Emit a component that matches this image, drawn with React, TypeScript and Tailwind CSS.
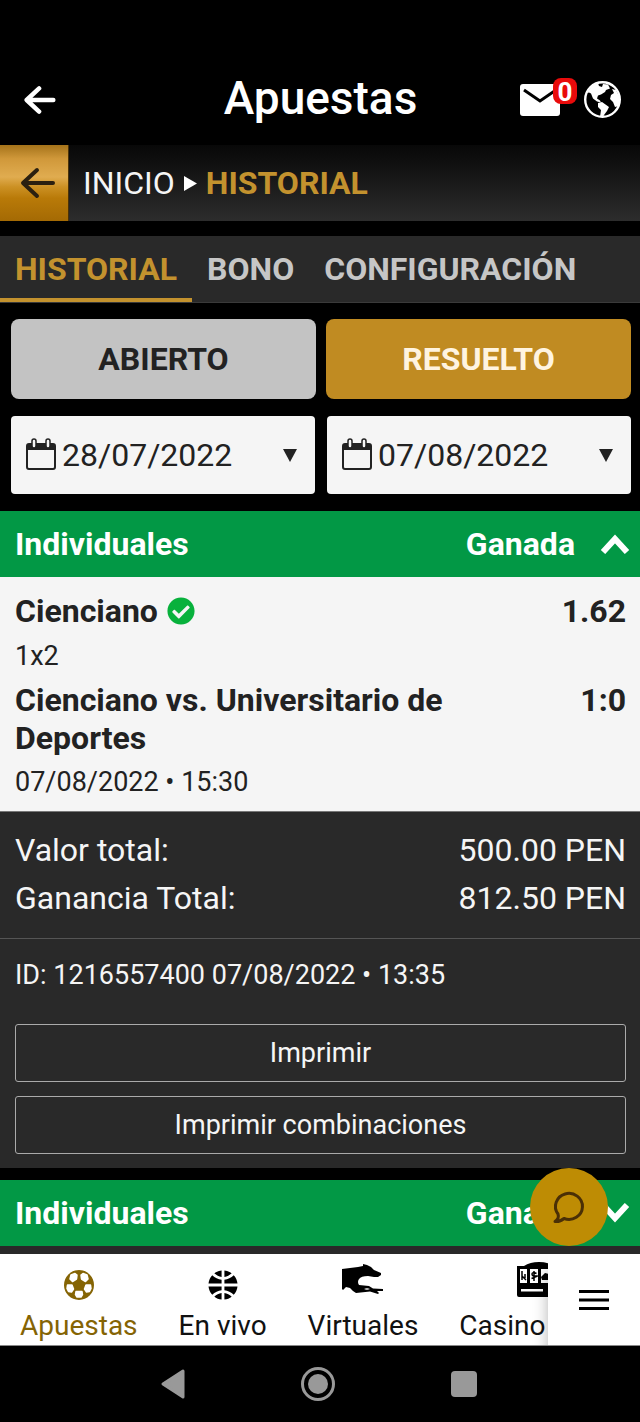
import React from 'react'
import { FaBasketballBall, FaCheckCircle } from 'react-icons/fa'

const TABS = ['HISTORIAL', 'BONO', 'CONFIGURACIÓN']

function BackArrow({ weight, className }: { weight: number; className: string }) {
  return (
    <svg viewBox="0 0 36 32" className={className} fill="none" stroke="currentColor" strokeWidth={weight} strokeLinecap="round" strokeLinejoin="round" aria-hidden="true">
      <path d="M33 16H4M17 3 3 16l14 13" />
    </svg>
  )
}

function MailIcon() {
  return (
    <svg viewBox="0 0 40 32" className="w-10 h-8" aria-hidden="true">
      <rect width="40" height="32" rx="3" fill="#fff" />
      <path d="m4 6 16 11L36 6" fill="none" stroke="#000" strokeWidth="3" />
    </svg>
  )
}

function GlobeIcon() {
  return (
    <svg viewBox="0 0 37 37" className="w-[37px] h-[37px]" fill="#fff" aria-hidden="true">
      <circle cx="18.500" cy="18.500" r="17.300" fill="none" stroke="#fff" strokeWidth="2.400" />
      <path d="M3 12 8 4.500 14 2l1 3 3 1 1-3 5 .5 2 4-4 1.500-1 2-4 2.500-3 1-1 3 3 2 1 2-4-1-4-3-2-5-2-1z" />
      <path d="m14 22 4-1 7 5-2 4-3 4-1 2h-3l1-7-3-3z" />
      <path d="m28 8 4 1 4 8-1 8-4 1-2-5-3-3 1-4 3-2z" />
    </svg>
  )
}

function CalendarIcon() {
  return (
    <svg viewBox="0 0 30 32" className="w-[30px] h-8 shrink-0 mb-[2px]" aria-hidden="true">
      <rect x="1" y="6" width="28" height="25" rx="2" fill="none" stroke="#222" strokeWidth="2" />
      <path d="M1 6h28v6H1z" fill="#222" />
      <rect x="6" y="1" width="4" height="9" rx="2" fill="#f5f5f5" stroke="#222" strokeWidth="1.500" />
      <rect x="20" y="1" width="4" height="9" rx="2" fill="#f5f5f5" stroke="#222" strokeWidth="1.500" />
    </svg>
  )
}

function ChatIcon() {
  return (
    <svg viewBox="0 0 34 34" className="w-[34px] h-[34px]" fill="none" stroke="#4a2f06" strokeWidth="3" strokeLinejoin="round" aria-hidden="true">
      <path d="M3 31.500C6 29.500 7 27 6 24A13.500 13 0 1 1 12 28.500Q8 32 3 31.500z" />
    </svg>
  )
}

function SoccerIcon() {
  return (
    <svg viewBox="0 0 30 30" className="w-[30px] h-[30px]" aria-hidden="true">
      <circle cx="15" cy="15" r="15" fill="#856404" />
      <g fill="#fff" stroke="#fff" strokeWidth="1.500" strokeLinejoin="round">
        <path d="m7 5 4-1.500 2 1.500-.5 4-4 2.500L6 9z" />
        <path d="m23 5-4-1.500L17 5l.5 4 4 2.500L24 9z" />
        <path d="m3.500 15 4.500 0 1.500 4-2 3-3-.5-1.500-3z" />
        <path d="m26.500 15-4.500 0-1.500 4 2 3 3-.5 1.500-3z" />
        <path d="m12 21.500h6l.5 3-1.500 2.500h-4L11.500 24.500z" />
      </g>
    </svg>
  )
}

function GreyhoundIcon() {
  return (
    <svg viewBox="0 0 42 32" className="w-[42px] h-8 mb-3" fill="#000" aria-hidden="true">
      <path d="M0 6 16 4 21 3V1l4 1 4 2 3 3 7 3v2l-3 2h-4l-6-1Q19 13 17 16q-2 3 0 6l10 1 4 2.500 10 .5v2h-6l2 2-1 1-8-2.500L14 30l-3-2-3-3-4-1-3 3-1-1z" />
      <path d="M22 26q3-1.500 6 0-3 1.500-6 0z" fill="#fff" />
    </svg>
  )
}

function SlotIcon() {
  return (
    <svg viewBox="0 0 44 36" className="w-11 h-9 mb-3" aria-hidden="true">
      <path d="M0 5h7q6-4 15-4t15 4h7v29q0 2-2 2H2q-2 0-2-2z" fill="#000" />
      <path d="M3 8h7v14H3zM13 8h8v14h-8zM24 8h8v14h-8zM4 28h22v2.500H4z" fill="#fff" />
      <path d="M5 10v9M5 15l4 4M8 13v4M19.500 12.500q-4.500-2-4.500.5t4 2-4.500 2.500M17 10v10" fill="none" stroke="#000" strokeWidth="1.500" />
      <path d="m24 16 4-4 4 1v6h-7z" fill="#000" />
    </svg>
  )
}

function DateField({ label, value }: { label: string; value: string }) {
  return (
    <label className="flex-1 min-w-0 h-[78px] flex items-center gap-[6px] pl-[15px] pr-[18px] bg-[#f5f5f5] rounded text-[#222]">
      <CalendarIcon />
      <select aria-label={label} defaultValue={value} className="flex-1 min-w-0 appearance-none bg-transparent text-[32px] leading-10 outline-none">
        <option>{value}</option>
      </select>
      <svg viewBox="0 0 14 13" className="w-[14px] h-[13px] shrink-0" aria-hidden="true">
        <path d="M0 0h14L7 13z" fill="#222" />
      </svg>
    </label>
  )
}

function BetHeader({ open }: { open: boolean }) {
  return (
    <button type="button" aria-expanded={open} className="w-full h-[66px] flex items-center pl-[15px] pr-[10px] bg-[#029845] text-white text-[32px] leading-10 font-bold">
      <span>Individuales</span>
      <span className="ml-auto mr-[25px]">Ganada</span>
      <svg viewBox="0 0 30 20" className="w-[30px] h-5" fill="none" stroke="#fff" strokeWidth="6" aria-hidden="true">
        <path d={open ? 'M3 18 15 5l12 13' : 'm3 2 12 13L27 2'} />
      </svg>
    </button>
  )
}

function NavItem({ label, icon, active }: { label: string; icon: React.ReactNode; active?: boolean }) {
  return (
    <a href="#" className={`shrink-0 px-5 flex flex-col items-center text-[28px] leading-9 ${active ? 'text-[#856404]' : 'text-[#111]'}`}>
      <span className="h-[54px] flex items-center pt-[7px]">{icon}</span>
      <span>{label}</span>
    </a>
  )
}

export default function App() {
  return (
    <div className="min-h-screen flex flex-col bg-black text-[#f5f5f5] overflow-x-hidden font-['Roboto','Liberation_Sans',sans-serif]">
      <header className="h-[145px] pt-[54px] pl-5 pr-[19px] grid grid-cols-[1fr_auto_1fr] items-center text-white">
        <button type="button" aria-label="Atrás" className="justify-self-start pl-1">
          <BackArrow weight={5} className="w-8 h-[30px]" />
        </button>
        <h1 className="text-[46px] leading-[54px] pb-1 font-medium">Apuestas</h1>
        <div className="justify-self-end flex items-center gap-6">
          <button type="button" aria-label="Mensajes" className="relative">
            <MailIcon />
            <span className="absolute -right-[17px] -top-[6px] w-6 h-[26px] rounded-lg bg-[#e90b0b] text-[26px] leading-[28px] font-bold text-center">0</span>
          </button>
          <button type="button" aria-label="Idioma">
            <GlobeIcon />
          </button>
        </div>
      </header>

      <nav className="h-[76px] flex items-center bg-linear-to-b from-[#080808] to-[#2d2d2d] text-[32px] leading-10">
        <button type="button" aria-label="Volver" className="w-[69px] h-full flex items-center pl-5 text-[#2b2010] border-r border-[#4a3208] bg-[linear-gradient(#a5731a_0%,#d0983a_18%,#e0ac50_42%,#cc9124_55%,#b97a08_70%,#a46a04_100%)]">
          <BackArrow weight={4} className="w-9 h-8" />
        </button>
        <a href="#" className="ml-[14px]">INICIO</a>
        <svg viewBox="0 0 13 15" className="w-[13px] h-[15px] mx-[9px]" aria-hidden="true">
          <path d="M0 0 13 7.500 0 15z" fill="#fff" />
        </svg>
        <span className="font-bold text-[#c3922e]">HISTORIAL</span>
      </nav>

      <div role="tablist" className="mt-[15px] h-[67px] flex bg-[#292929] border-b border-[#3a3a3a] text-[32px] leading-10 font-bold">
        {TABS.map((tab, i) => (
          <button
            key={tab}
            type="button"
            role="tab"
            aria-selected={i === 0}
            className={`px-[15px] pt-1 border-b-4 ${i === 0 ? 'text-[#c3922e] border-[#c3922e]' : 'text-[#c6c6c6] border-transparent'}`}
          >
            {tab}
          </button>
        ))}
      </div>

      <main>
        <div className="flex gap-[10px] pl-[11px] pr-[9px] pt-4 text-[32px] leading-10 font-bold">
          <button type="button" className="flex-1 h-20 rounded-lg bg-[#c3c3c3] text-[#222]">ABIERTO</button>
          <button type="button" className="flex-1 h-20 rounded-lg bg-[#c08b22] text-[#fff4e0]">RESUELTO</button>
        </div>
        <div className="flex gap-3 pl-[11px] pr-[9px] py-[17px]">
          <DateField label="Desde" value="28/07/2022" />
          <DateField label="Hasta" value="07/08/2022" />
        </div>

        <section>
          <BetHeader open />
          <div className="pl-[15px] pr-[14px] pt-[14px] pb-2 bg-[#f5f5f5] text-[#222] border-b border-[#777]">
            <div className="flex justify-between text-[32px] leading-10 font-bold">
              <span className="flex items-center gap-[9px]">
                Cienciano <FaCheckCircle className="w-7 h-7 text-[#08b13c]" />
              </span>
              <span>1.62</span>
            </div>
            <p className="text-[27px] leading-[50px]">1x2</p>
            <div className="flex justify-between text-[32px] leading-[38px] font-bold">
              <span className="max-w-[460px]">Cienciano vs. Universitario de Deportes</span>
              <span>1:0</span>
            </div>
            <p className="text-[27px] leading-[42px] pt-1">07/08/2022 • 15:30</p>
          </div>

          <dl className="pl-[15px] pr-[14px] pt-[14px] pb-4 bg-[#292929] border-b border-[#555] text-[32px] leading-[48px]">
            <div className="flex justify-between"><dt>Valor total:</dt><dd>500.00 PEN</dd></div>
            <div className="flex justify-between"><dt>Ganancia Total:</dt><dd>812.50 PEN</dd></div>
          </dl>

          <div className="pl-[15px] pr-[14px] pt-4 pb-[14px] bg-[#292929] text-[27px]">
            <p className="leading-10">ID: 1216557400 07/08/2022 • 13:35</p>
            <div className="pt-[29px] flex flex-col gap-[14px]">
              <button type="button" className="h-[58px] border border-[#aaa] rounded-[3px]">Imprimir</button>
              <button type="button" className="h-[58px] border border-[#aaa] rounded-[3px]">Imprimir combinaciones</button>
            </div>
          </div>
        </section>

        <section className="mt-3 pb-2 bg-[#292929]">
          <BetHeader open={false} />
        </section>
      </main>

      <footer className="relative">
        <button type="button" aria-label="Chat" className="absolute right-8 bottom-full mb-2 w-[78px] h-[78px] rounded-full bg-[#be8c04] flex items-center justify-center">
          <ChatIcon />
        </button>
        <nav className="h-[92px] flex bg-white border-b border-[#888] overflow-hidden">
          <div className="flex-1 min-w-0 flex gap-px overflow-hidden">
            <NavItem active label="Apuestas" icon={<SoccerIcon />} />
            <NavItem label="En vivo" icon={<FaBasketballBall className="w-[30px] h-[30px] text-black rotate-45" />} />
            <NavItem label="Virtuales" icon={<GreyhoundIcon />} />
            <a href="#" className="w-[200px] shrink-0 px-5 text-[28px] leading-9 text-[#111]">
              <span className="h-[54px] flex items-center pt-[7px] pl-[58px]"><SlotIcon /></span>
              <span>Casino</span>
            </a>
          </div>
          <button type="button" aria-label="Menú" className="w-[92px] flex items-center justify-center bg-white shadow-[0_16px_14px_rgba(0,0,0,0.3)]">
            <svg viewBox="0 0 30 20" className="w-[30px] h-5" aria-hidden="true">
              <path d="M0 1.500h30M0 10h30M0 18.500h30" stroke="#000" strokeWidth="3" />
            </svg>
          </button>
        </nav>
        <div className="h-[76px] pl-[161px] pr-[163px] flex items-center justify-between">
          <button type="button" aria-label="Retroceder">
            <svg viewBox="0 0 24 30" className="w-6 h-[30px]"><path d="M2 15 22 2v26z" fill="#999" stroke="#999" strokeWidth="3" strokeLinejoin="round" /></svg>
          </button>
          <button type="button" aria-label="Pantalla de inicio">
            <svg viewBox="0 0 34 34" className="w-[34px] h-[34px]"><circle cx="17" cy="17" r="15.500" fill="none" stroke="#999" strokeWidth="3" /><circle cx="17" cy="17" r="10" fill="#999" /></svg>
          </button>
          <button type="button" aria-label="Recientes">
            <svg viewBox="0 0 26 26" className="w-[26px] h-[26px]"><rect width="26" height="26" rx="4" fill="#999" /></svg>
          </button>
        </div>
      </footer>
    </div>
  )
}
